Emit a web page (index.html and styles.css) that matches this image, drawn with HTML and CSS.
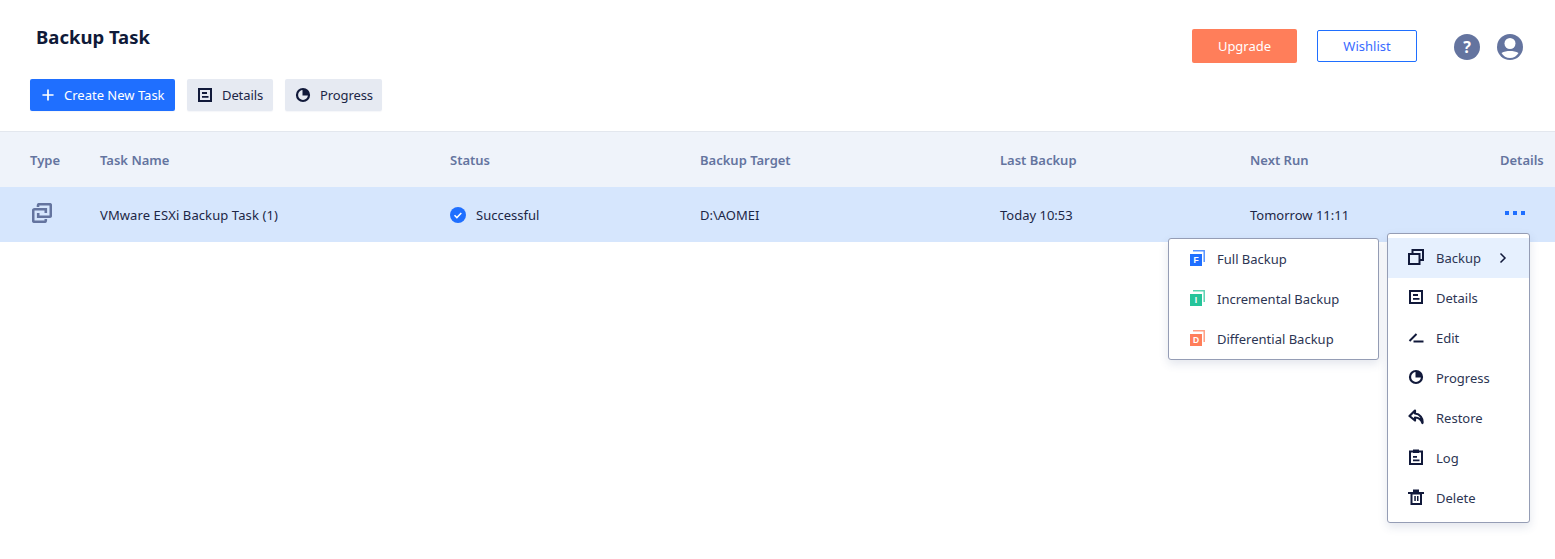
FILE: index.html
```html
<!DOCTYPE html>
<html lang="en">
<head>
<meta charset="utf-8">
<title>Backup Task</title>
<link rel="stylesheet" href="styles.css">
</head>
<body>
<svg class="defs" width="0" height="0" aria-hidden="true">
  <symbol id="i-details" viewBox="0 0 16 16"><path d="M2 2h12v12H2z" fill="none" stroke="currentColor" stroke-width="2"/><path d="M5 5h5v2H5zM5 9h6.500v1.800H5z" fill="currentColor"/></symbol>
  <symbol id="i-progress" viewBox="0 0 16 16"><circle cx="8" cy="8" r="6" fill="none" stroke="currentColor" stroke-width="2.200"/><path d="M7.500 8.500V2a6.500 6.500 0 0 1 6.500 6.500z" fill="currentColor"/></symbol>
</svg>
<header class="top">
  <div class="top-left">
    <h1 class="title">Backup Task</h1>
    <div class="toolbar">
      <button class="btn btn-primary"><svg class="plus" viewBox="0 0 14 14"><path d="M7 .5v13M.5 7h13" stroke="currentColor" stroke-width="2"/></svg>Create New Task</button>
      <button class="btn btn-gray btn-details"><svg class="ico"><use href="#i-details"/></svg>Details</button>
      <button class="btn btn-gray btn-progress"><svg class="ico"><use href="#i-progress"/></svg>Progress</button>
    </div>
  </div>
  <div class="top-right">
    <button class="upgrade">Upgrade</button>
    <button class="wishlist">Wishlist</button>
    <div class="round round-help">?</div>
    <svg class="round-user" viewBox="0 0 26 26"><circle cx="13" cy="13" r="13" fill="#64749f"/><circle cx="13" cy="9.500" r="5.500" fill="#fff"/><path d="M4.500 19C7 17.500 10 17 13 17s6 .5 8.500 2C19.800 22 16.500 24 13 24s-6.800-2-8.500-5z" fill="#fff"/></svg>
  </div>
</header>
<main class="table">
  <div class="row head">
    <div>Type</div><div>Task Name</div><div>Status</div><div>Backup Target</div><div>Last Backup</div><div>Next Run</div><div>Details</div>
  </div>
  <div class="row body">
    <div><svg class="type-ico" viewBox="0 0 20 20"><g fill="none" stroke="#64749f" stroke-width="2.600"><path d="M6 4V2.500a1.300 1.300 0 0 1 1.300-1.300h10.200a1.300 1.300 0 0 1 1.300 1.300v10a1.300 1.300 0 0 1-1.300 1.300H6.200V10"/><path d="M13.800 16V17.500a1.300 1.300 0 0 1-1.300 1.300h-10a1.300 1.300 0 0 1-1.300-1.300v-10a1.300 1.300 0 0 1 1.300-1.300h11.300V10"/></g></svg></div>
    <div class="task-name">VMware ESXi Backup Task (1)</div>
    <div class="status"><svg class="check" viewBox="0 0 16 16"><circle cx="8" cy="8" r="8" fill="#1f6fff"/><path d="M4.500 8.200l2.400 2.400 4.400-4.700" fill="none" stroke="#fff" stroke-width="1.500"/></svg>Successful</div>
    <div>D:\AOMEI</div>
    <div>Today 10:53</div>
    <div>Tomorrow 11:11</div>
    <div class="dots"><i></i><i></i><i></i></div>
  </div>
</main>
<nav class="menu submenu">
  <div class="item"><svg class="kind" viewBox="0 0 16 16"><path d="M4 .8h11.200V12" fill="none" stroke="#1f6fff" stroke-opacity=".75" stroke-width="1.500"/><path d="M1 4h12v12H1z" fill="#1f6fff"/><text x="7" y="13" class="kind-letter">F</text></svg>Full Backup</div>
  <div class="item"><svg class="kind" viewBox="0 0 16 16"><path d="M4 .8h11.200V12" fill="none" stroke="#25c49a" stroke-opacity=".75" stroke-width="1.500"/><path d="M1 4h12v12H1z" fill="#25c49a"/><text x="7" y="13" class="kind-letter">I</text></svg>Incremental Backup</div>
  <div class="item"><svg class="kind" viewBox="0 0 16 16"><path d="M4 .8h11.200V12" fill="none" stroke="#ff7e5a" stroke-opacity=".75" stroke-width="1.500"/><path d="M1 4h12v12H1z" fill="#ff7e5a"/><text x="7" y="13" class="kind-letter">D</text></svg>Differential Backup</div>
</nav>
<nav class="menu mainmenu">
  <div class="item active"><svg class="ico" viewBox="0 0 16 16"><path d="M1 5h10.500v10H1zM4.500 5V1h10.500v10h-3.500" fill="none" stroke="currentColor" stroke-width="2"/></svg><span>Backup</span><svg class="chev" viewBox="0 0 8 12"><path d="M1.500 1.500L6 6l-4.500 4.500" fill="none" stroke="currentColor" stroke-width="1.500"/></svg></div>
  <div class="item"><svg class="ico"><use href="#i-details"/></svg><span>Details</span></div>
  <div class="item"><svg class="ico" viewBox="0 0 16 16"><path d="M1.500 12L8.500 5" fill="none" stroke="currentColor" stroke-width="2"/><path d="M5.500 12.500h10" fill="none" stroke="currentColor" stroke-width="2"/></svg><span>Edit</span></div>
  <div class="item"><svg class="ico"><use href="#i-progress"/></svg><span>Progress</span></div>
  <div class="item"><svg class="ico" viewBox="0 0 16 16"><path d="M7 1.500L1.500 7 7 11.500V8.500c3.500 0 6 1.500 7.500 5.500.5-5-2.500-9-7.500-9.500z" fill="none" stroke="currentColor" stroke-width="2.200" stroke-linejoin="round"/></svg><span>Restore</span></div>
  <div class="item"><svg class="ico" viewBox="0 0 16 16"><path d="M2 2.500h12V15H2z" fill="none" stroke="currentColor" stroke-width="2"/><path d="M5 .5h6v3.500H5zM5 7h4v1.800H5zM5 10.500h6.500v1.800H5z" fill="currentColor"/></svg><span>Log</span></div>
  <div class="item"><svg class="ico" viewBox="0 0 16 16"><path d="M3.500 4.500h9.500V15H3.500z" fill="none" stroke="currentColor" stroke-width="2"/><path d="M0 3h16v2H0zM5 .5h6v2.500H5zM6.300 7h1.500v5H6.300zM9 7h1.500v5H9z" fill="currentColor"/></svg><span>Delete</span></div>
</nav>
</body>
</html>
```
FILE: styles.css
```css
* { box-sizing: border-box; }
html, body { margin: 0; padding: 0; }
body {
  height: 559px;
  background: #fff;
  color: #11193a;
  font-family: "Noto Sans", sans-serif;
  font-size: 13px;
  position: relative;
  overflow: hidden;
}
.defs { position: absolute; }
.top {
  height: 132px;
  border-bottom: 1px solid #e3e7ee;
  display: flex;
  justify-content: space-between;
  padding: 0 32px 0 30px;
}
.title {
  margin: 0 0 29px 6px;
  padding-top: 24px;
  font-size: 18.500px;
  line-height: 26px;
  font-weight: 700;
  color: #0f1a38;
}
.toolbar { display: flex; gap: 12px; }
.btn {
  height: 32px;
  border: 0;
  border-radius: 2px;
  font: inherit;
  display: flex;
  align-items: center;
  padding: 0;
  box-shadow: 0 1px 1px rgba(60, 80, 130, .05);
}
.btn-primary { width: 145px; background: #1f6fff; color: #fff; padding-left: 12px; }
.plus { width: 12px; height: 12px; margin-right: 10px; }
.btn-gray { background: #e6eaf2; color: #1c2646; letter-spacing: -.1px; }
.btn-details { width: 86px; padding-left: 10px; }
.btn-progress { width: 97px; padding-left: 10px; }
.ico { width: 16px; height: 16px; flex: none; color: #11193a; margin: -2px 12px 0 0; }
.btn .ico { width: 16px; height: 16px; margin: -1px 9px 0 0; }
.top-right { display: flex; align-items: flex-start; padding-top: 29px; }
.upgrade {
  width: 105px; height: 34px;
  border: 0; border-radius: 2px;
  background: #ff7e5a; color: #fff;
  font: inherit; font-size: 13px;
}
.wishlist {
  width: 100px; height: 32px;
  margin: 1px 37px 0 20px;
  border: 1px solid #1f6fff; border-radius: 2px;
  background: #fff; color: #3a6cff;
  font: inherit;
}
.round {
  width: 26px; height: 26px;
  margin-top: 5px;
  border-radius: 50%;
  background: #64749f; color: #fff;
  font-size: 16px; font-weight: 700;
  line-height: 26px; text-align: center;
}
.round-user { width: 26px; height: 26px; margin: 5px 0 0 17px; }
.row {
  display: grid;
  grid-template-columns: 70px 350px 250px 300px 250px 250px 55px;
  padding-left: 30px;
  align-items: center;
}
.head {
  height: 55px;
  background: #eff3fa;
  color: #64749f;
  font-weight: 600;
}
.body { height: 55px; background: #d6e6fd; color: #1c2646; }
.task-name { letter-spacing: .1px; }
.type-ico { display: block; width: 20px; height: 20px; margin: -3px 0 0 2px; }
.status { display: flex; align-items: center; }
.check { width: 16px; height: 16px; margin-right: 10px; }
.dots { display: flex; gap: 4px; margin: -3px 0 0 5px; }
.dots i { width: 4px; height: 4px; background: #1f6fff; }
.menu {
  position: absolute;
  background: #fff;
  border: 1px solid #959db5;
  border-radius: 3px;
  box-shadow: 0 4px 10px rgba(60, 80, 130, .14);
  color: #2c3553;
}
.item { height: 40px; display: flex; align-items: center; }
.submenu { left: 1168px; top: 238px; width: 211px; height: 122px; }
.submenu .item { padding-left: 20px; }
.kind { width: 16px; height: 16px; margin: -2px 12px 0 0; flex: none; }
.kind-letter { fill: #fff; font-family: "Liberation Sans", sans-serif; font-size: 8.500px; font-weight: 700; text-anchor: middle; }
.mainmenu { left: 1387px; top: 233px; width: 143px; height: 290px; padding-top: 4px; }
.mainmenu .item { padding-left: 20px; }
.active { background: #e6f0fe; }
.chev { width: 8px; height: 12px; margin-left: 18px; color: #11193a; }
```
